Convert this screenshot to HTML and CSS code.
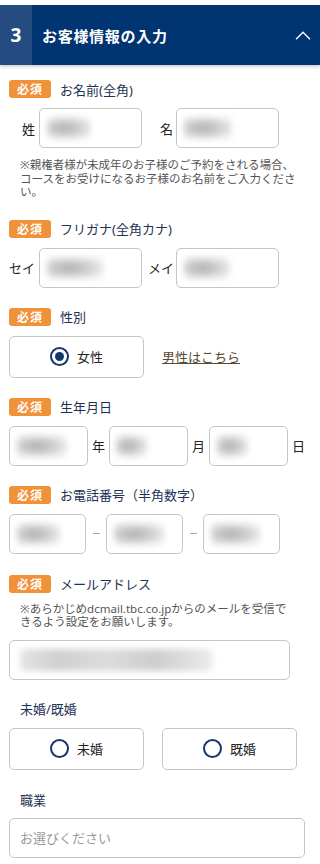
FILE: index.html
```html
<!DOCTYPE html>
<html lang="ja">
<head>
<meta charset="utf-8">
<title>お客様情報の入力</title>
<link rel="stylesheet" href="styles.css">
</head>
<body>
<header class="step-head">
  <div class="step-num">3</div>
  <div class="step-title">お客様情報の入力</div>
  <svg class="chev" width="16" height="9" viewBox="0 0 16 9"><polyline points="1,8.2 8,1.2 15,8.2" fill="none" stroke="#fff" stroke-width="1.4"/></svg>
</header>

<main class="form">
  <div class="field-label first"><span class="badge">必須</span><span class="label-text">お名前(全角)</span></div>
  <div class="row name-row">
    <span class="sub sub-sei">姓</span>
    <div class="inp w103"><span class="blur bw44"></span></div>
    <span class="sub sub-mei">名</span>
    <div class="inp w103"><span class="blur bw48"></span></div>
  </div>
  <p class="note note-name">※親権者様が未成年のお子様のご予約をされる場合、コースをお受けになるお子様のお名前をご入力ください。</p>

  <div class="field-label sec-kana"><span class="badge">必須</span><span class="label-text">フリガナ(全角カナ)</span></div>
  <div class="row">
    <span class="sub kana1">セイ</span>
    <div class="inp w103"><span class="blur bw56"></span></div>
    <span class="sub kana2">メイ</span>
    <div class="inp w103"><span class="blur bw46"></span></div>
  </div>

  <div class="field-label sec"><span class="badge">必須</span><span class="label-text">性別</span></div>
  <div class="row">
    <div class="radio-box"><span class="radio checked"></span><span class="radio-text">女性</span></div>
    <a class="link" href="#">男性はこちら</a>
  </div>

  <div class="field-label sec"><span class="badge">必須</span><span class="label-text">生年月日</span></div>
  <div class="row">
    <div class="inp w79"><span class="blur bw50"></span></div>
    <span class="unit">年</span>
    <div class="inp w79"><span class="blur bw31 b6"></span></div>
    <span class="unit">月</span>
    <div class="inp w79"><span class="blur bw31"></span></div>
    <span class="unit">日</span>
  </div>

  <div class="field-label sec"><span class="badge">必須</span><span class="label-text">お電話番号（半角数字）</span></div>
  <div class="row">
    <div class="inp w77"><span class="blur bw43"></span></div>
    <span class="dash"></span>
    <div class="inp w77"><span class="blur bw50"></span></div>
    <span class="dash"></span>
    <div class="inp w77"><span class="blur bw49"></span></div>
  </div>

  <div class="field-label sec-mail"><span class="badge">必須</span><span class="label-text">メールアドレス</span></div>
  <p class="note note-mail">※あらかじめdcmail.tbc.co.jpからのメールを受信できるよう設定をお願いします。</p>
  <div class="inp w281 mail"><span class="blur bw193 b11"></span></div>

  <div class="plain-label marital">未婚/既婚</div>
  <div class="row">
    <div class="radio-box"><span class="radio"></span><span class="radio-text">未婚</span></div>
    <div class="radio-box second"><span class="radio"></span><span class="radio-text">既婚</span></div>
  </div>

  <div class="plain-label job">職業</div>
  <div class="select">お選びください</div>
</main>
</body>
</html>
```

FILE: styles.css
```css
* { box-sizing: border-box; }
body {
  margin: 0;
  width: 320px;
  background: #fff;
  font-family: "Noto Sans", "Noto Sans CJK JP", sans-serif;
  color: #222;
}
.step-head {
  margin-top: 5px;
  height: 60px;
  background: #003571;
  display: flex;
  align-items: center;
  box-shadow: 0 2px 3px rgba(0, 0, 0, 0.18);
}
.step-num {
  width: 32px;
  height: 60px;
  background: #244c80;
  color: #fff;
  font-family: "Noto Sans", sans-serif;
  font-weight: bold;
  font-size: 19px;
  display: flex;
  align-items: center;
  justify-content: center;
}
.step-title {
  margin-left: 10px;
  color: #fff;
  font-weight: bold;
  font-size: 15px;
  letter-spacing: 0.7px;
  flex: 1;
}
.chev { margin-right: 9px; display: block; }

.form { padding-left: 9px; }
.field-label {
  display: flex;
  align-items: center;
  height: 18px;
}
.field-label.first { margin-top: 15px; }
.field-label.sec { margin-top: 20px; }
.field-label.sec-kana { margin-top: 21px; }
.field-label.sec-mail { margin-top: 21px; }
.badge {
  width: 42px;
  height: 18px;
  background: #f0923a;
  color: #fff;
  font-size: 12px;
  font-weight: bold;
  letter-spacing: 1px;
  border-radius: 3px;
  display: flex;
  align-items: center;
  justify-content: center;
}
.label-text {
  margin-left: 9px;
  font-size: 13px;
  color: #1e3253;
}
.row {
  display: flex;
  align-items: center;
  margin-top: 10px;
}
.sub { font-size: 13px; color: #222; }
.name-row { padding-left: 13px; }
.sub-sei { margin-right: 4px; }
.sub-mei { margin-left: 18px; margin-right: 3px; }
.kana1 { width: 26px; margin-right: 4px; }
.kana2 { width: 26px; margin-left: 6px; margin-right: 2px; }

.inp {
  height: 40px;
  border: 1px solid #c6c6c6;
  border-radius: 5px;
  display: flex;
  align-items: center;
  padding-left: 7px;
  background: #fff;
}
.w103 { width: 103px; }
.w79 { width: 79px; }
.w77 { width: 77px; }
.w281 { width: 281px; }
.blur {
  display: block;
  height: 22px;
  border-radius: 6px;
  background: radial-gradient(ellipse at 40% 50%, #adadad 0%, #cdcdcd 40%, #ebebeb 75%, #f7f7f7 100%);
  filter: blur(3px);
}
.b6 { margin-left: -1px; }
.b11 { margin-left: 3px; }
.bw31 { width: 31px; }
.bw43 { width: 43px; }
.bw44 { width: 44px; }
.bw46 { width: 46px; }
.bw48 { width: 48px; }
.bw49 { width: 49px; }
.bw50 { width: 50px; }
.bw56 { width: 56px; }
.bw193 {
  width: 193px;
  background: linear-gradient(90deg, #e4e4e4, #d0d0d0 20%, #dcdcdc 45%, #cdcdcd 70%, #ececec);
}
.unit {
  font-size: 13px;
  color: #222;
  margin: 0 4px;
}
.dash {
  width: 20px;
  display: flex;
  justify-content: center;
}
.dash::before {
  content: "";
  width: 7px;
  height: 1px;
  background: #aaa;
}

.note {
  margin: 0;
  width: 282px;
  margin-left: 11px;
  font-size: 11.5px;
  line-height: 13.5px;
  color: #555;
}
.note-name { margin-top: 10px; }
.note-mail { margin-top: 9px; width: 272px; }
.mail { margin-top: 11px; }

.radio-box {
  width: 135px;
  height: 42px;
  border: 1px solid #c6c6c6;
  border-radius: 5px;
  display: flex;
  align-items: center;
  justify-content: center;
  gap: 8px;
}
.radio-box.second { margin-left: 18px; }
.radio {
  width: 19px;
  height: 19px;
  border: 2.6px solid #12386b;
  border-radius: 50%;
  display: flex;
  align-items: center;
  justify-content: center;
}
.radio.checked::after {
  content: "";
  width: 9px;
  height: 9px;
  border-radius: 50%;
  background: #12386b;
}
.radio-text { font-size: 13px; color: #222; }
.link {
  margin-left: 18px;
  font-size: 13px;
  color: #5a4a34;
  text-decoration: underline;
}

.plain-label {
  margin-left: 11px;
  font-size: 13px;
  line-height: 18px;
  color: #1e3253;
}
.marital { margin-top: 20px; }
.job { margin-top: 21px; }
.select {
  margin-top: 9px;
  width: 296px;
  height: 40px;
  border: 1px solid #c6c6c6;
  border-radius: 5px;
  padding-left: 10px;
  display: flex;
  align-items: center;
  font-size: 13px;
  color: #999;
}
```
